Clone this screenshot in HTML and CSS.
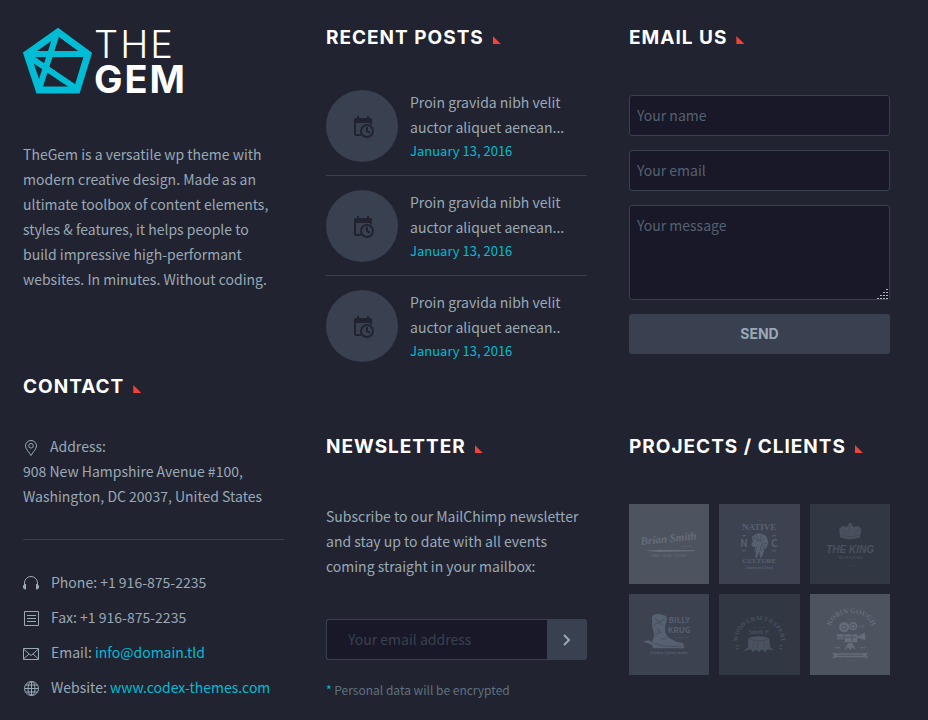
FILE: index.html
```html
<!DOCTYPE html>
<html lang="en">
<head>
<meta charset="utf-8">
<meta name="viewport" content="width=device-width, initial-scale=1">
<title>TheGem</title>
<link rel="stylesheet" href="styles.css">
</head>
<body>
<svg class="sprite" aria-hidden="true">
  <symbol id="calendar" viewBox="0 0 22 24">
    <path fill="currentColor" fill-rule="evenodd" d="M2 3h2V1h2v2h8V1h2v2h1a2 2 0 0 1 2 2v4.500h-2V8H3v11h5v2H3a2 2 0 0 1-2-2V5a2 2 0 0 1 1-2z"/>
    <circle cx="14" cy="16" r="6" fill="none" stroke="currentColor" stroke-width="2"/>
    <path d="M14 12v4l3 2" fill="none" stroke="currentColor" stroke-width="2"/>
  </symbol>
</svg>
<footer class="footer">
  <div class="column">
    <a class="logo" href="#" aria-label="The Gem">
      <svg class="logo-mark" viewBox="0 0 70 68" aria-hidden="true">
        <path fill="none" stroke="#00bcd4" stroke-width="7" d="M35 5 65 27 54 63H16L4 27Z"/>
        <path fill="none" stroke="#00bcd4" stroke-width="6" d="M4 27H65M34 6 16 62M8 31 54 62"/>
      </svg>
      <span class="logo-text"><span class="logo-the">THE</span><span class="logo-gem">GEM</span></span>
    </a>
    <p class="about">TheGem is a versatile wp theme with modern creative design. Made as an ultimate toolbox of content elements, styles &amp; features, it helps people to build impressive high-performant websites. In minutes. Without coding.</p>
    <section class="contact">
      <h2 class="title">CONTACT</h2>
      <address class="address">
        <svg class="icon pin" viewBox="0 0 16 16" aria-hidden="true"><path d="M8 15.500C6 12 2.500 9 2.500 5.800a5.500 5.300 0 0 1 11 0C13.500 9 10 12 8 15.500Z"/><circle cx="8" cy="5.800" r="2.300"/></svg>Address:<br>908 New Hampshire Avenue #100,<br>Washington, DC 20037, United States
      </address>
      <ul class="contact-list">
        <li><svg class="icon" viewBox="0 0 16 16" aria-hidden="true"><path d="M1.500 11V8a6.500 6.500 0 0 1 13 0v3"/><path class="solid" d="M0 10.500 2 9h1v5.500H2L0 13ZM16 10.500 14 9h-1v5.500h1L16 13Z"/></svg>Phone: +1 916-875-2235</li>
        <li><svg class="icon" viewBox="0 0 16 16" aria-hidden="true"><path d="M1.500 1.500h14v14h-14zM4 5.500h9M4 8.500h9M4 11.500h9"/></svg>Fax: +1 916-875-2235</li>
        <li><svg class="icon" viewBox="0 0 16 16" aria-hidden="true"><path d="M.5 3.500h15v11H.5zM.5 4 8 10.500 15.500 4M.5 14l5.500-5M15.500 14 10 9"/></svg><span>Email: <a href="mailto:info@domain.tld">info@domain.tld</a></span></li>
        <li><svg class="icon" viewBox="0 0 16 16" aria-hidden="true"><circle cx="8.500" cy="8.500" r="7"/><ellipse cx="8.500" cy="8.500" rx="3.500" ry="7"/><path d="M8.500 1.500v14M1.500 8.500h14M2.500 5h12M2.500 12h12"/></svg><span>Website: <a href="#">www.codex-themes.com</a></span></li>
      </ul>
    </section>
  </div>

  <div class="column">
    <section>
      <h2 class="title">RECENT POSTS</h2>
      <ul class="posts">
        <li class="post"><span class="thumb"><svg aria-hidden="true"><use href="#calendar"/></svg></span><div><a class="post-title" href="#">Proin gravida nibh velit auctor aliquet aenean...</a><time datetime="2016-01-13">January 13, 2016</time></div></li>
        <li class="post"><span class="thumb"><svg aria-hidden="true"><use href="#calendar"/></svg></span><div><a class="post-title" href="#">Proin gravida nibh velit auctor aliquet aenean...</a><time datetime="2016-01-13">January 13, 2016</time></div></li>
        <li class="post"><span class="thumb"><svg aria-hidden="true"><use href="#calendar"/></svg></span><div><a class="post-title" href="#">Proin gravida nibh velit auctor aliquet aenean..</a><time datetime="2016-01-13">January 13, 2016</time></div></li>
      </ul>
    </section>
    <section class="newsletter">
      <h2 class="title">NEWSLETTER</h2>
      <p>Subscribe to our MailChimp newsletter and stay up to date with all events coming straight in your mailbox:</p>
      <form class="subscribe">
        <input type="email" placeholder="Your email address" aria-label="Your email address">
        <button type="button" aria-label="Subscribe"><svg viewBox="0 0 10 12" aria-hidden="true"><path d="M2 1l5 5-5 5"/></svg></button>
      </form>
      <p class="note"><span>*</span> Personal data will be encrypted</p>
    </section>
  </div>

  <div class="column">
    <section>
      <h2 class="title">EMAIL US</h2>
      <form class="email-form">
        <input type="text" placeholder="Your name" aria-label="Your name">
        <input type="email" placeholder="Your email" aria-label="Your email">
        <textarea placeholder="Your message" aria-label="Your message"></textarea>
        <button type="button">SEND</button>
      </form>
    </section>
    <section class="projects">
      <h2 class="title">PROJECTS / CLIENTS</h2>
      <div class="clients">
        <a class="client light" href="#"><svg viewBox="0 0 80 80">
          <g transform="rotate(-6 40 40)"><text class="script" x="40" y="38" font-size="11">Brian Smith</text></g>
          <path d="M15 46.500 30 45.500 65 46v1l-35 .8Z"/><text x="57" y="43" font-size="2">SINCE 1987</text>
          <text x="40" y="53" font-size="3">PARIS · MILAN · SYDNEY</text></svg></a>
        <a class="client mid" href="#"><svg viewBox="0 0 80 80">
          <text x="40" y="17" font-size="2">THE</text><text class="serif" x="40" y="26" font-size="9">NATIVE</text>
          <text class="condensed" x="25" y="43" font-size="10">N</text><text class="condensed" x="55" y="43" font-size="10">C</text>
          <path d="M23 31h4v1h-4zM53 31h4v1h-4zM23 46h4v1h-4zM53 46h4v1h-4z"/>
          <path d="M33 32l2-1 2-1 3-1 3 1 3 1 2 3 1 4-1 4-2 3-2-1 1 3-2 5-2 2-1-7-2 6-2 1 1-7-2 1 1-5-3-1-1-2 2-3-1-2Z"/><path class="cut" d="M34 33l5 4M37 31l3 6M42 31l-1 6M46 34l-5 4M48 39l-6 1M46 43l-4-2M38 42l-2 5M41 42l1 5"/>
          <text class="serif" x="40" y="59" font-size="7">CULTURE</text><text class="script" x="40" y="65" font-size="4">American Chiefs</text></svg></a>
        <a class="client dark" href="#"><svg viewBox="0 0 80 80">
          <path d="M30 33l-1-8 3-3 5 1 2-4h2l2 4 5-1 3 3-1 8q-10 4-20 0Z"/><path class="cut" d="M31 25q4 2 6 6M39 21v9M49 25q-4 2-6 6M31 31q9 3 18 0"/>
          <text class="brush" x="40" y="49" font-size="10">THE KING</text><text x="40" y="55" font-size="3">TAILOR FOR MEN</text><text x="40" y="62" font-size="2">SYDNEY</text></svg></a>
        <a class="client mid" href="#"><svg viewBox="0 0 80 80">
          <path d="M23 23q2-4 7-3l7 2 1 4-2 5v7l3 5 7 4 8 2 1 5H24l-1-3-4-2-4-1v-1l5-1 3 2 2-7-2-10Z"/><path class="cut" d="M26 24l4 4 5-3M25 31l4-3 5 3M28 34l3 4M26 40l6-2M32 45l5-1M26 49l8 3 18 0"/>
          <text class="condensed" x="50" y="29" font-size="8">BILLY</text><text class="condensed" x="50" y="39" font-size="8">KRUG</text><text x="52" y="44" font-size="2">CUSTOM MADE</text><text class="script" x="40" y="60" font-size="4">Cowboy's jersey maker</text></svg></a>
        <a class="client dark" href="#"><svg viewBox="0 0 80 80">
          <path id="wood-arc" class="guide" d="M18 48a22 22 0 0 1 44 0"/><text class="serif" font-size="6"><textPath href="#wood-arc" startOffset="50%">WOOD CRAFT EXPERT</textPath></text>
          <text x="40" y="34" font-size="2">EST. IN 1979</text><text class="script" x="40" y="40" font-size="6">Smith F.</text>
          <path d="M29 44q11-4 21 0l1 9 4 3-7-1-2 3-3-3-4 3-1-3-5 3-1-3-8 2 5-4Z"/><path class="cut" d="M30 45q10 3 19 0M34 48v6M39 48l-1 5M45 48v5"/>
          <path d="M17 51h3v1h-3zM17 54h3v1h-3zM60 51h3v1h-3zM60 54h3v1h-3z"/></svg></a>
        <a class="client light" href="#"><svg viewBox="0 0 80 80">
          <path id="robin-arc" class="guide" d="M20 36a21 17 0 0 1 42 0"/><text class="serif" font-size="7"><textPath href="#robin-arc" startOffset="50%">ROBIN GOUGH</textPath></text>
          <text x="41" y="26" font-size="2">FILM ART</text><circle cx="34" cy="33" r="5"/><circle cx="43" cy="32" r="4"/><circle class="cut" cx="34" cy="33" r="2"/><circle class="cut" cx="43" cy="32" r="2"/><path d="M27 40h20v2l3-1 5-3v8l-5-2-3 0v4H34v-3h-7ZM38 49h4l4 7-4-3-2 3-2-3-4 3Z"/><path class="cut" d="M28 43h18M34 40v7M42 40v7"/>
          <text x="51" y="34" font-size="4">CR</text><path d="M22 58l4 1h28l4-1-2 3 2 3-4-1H26l-4 1 2-3ZM25 53h5v1h-5zM50 53h5v1h-5z"/><path class="cut" d="M27 61h26"/><text x="40" y="67" font-size="2">FILMS</text></svg></a>
      </div>
    </section>
  </div>
</footer>
</body>
</html>
```
FILE: styles.css
```css
* { box-sizing: border-box; }

body {
  margin: 0;
  background: #212330;
  color: #99a9b5;
  font: 14px/25px "Noto Sans CJK SC", "Noto Sans", sans-serif;
}

a { color: #00bcd4; text-decoration: none; }
p, ul { margin: 0; padding: 0; list-style: none; }
.sprite { position: absolute; width: 0; height: 0; }

.footer {
  display: grid;
  grid-template-columns: repeat(3, minmax(0, 1fr));
  gap: 42px;
  padding: 23px 38px 18px 23px;
}

.title {
  display: flex;
  align-items: baseline;
  gap: 9px;
  margin: 0 0 42px;
  color: #fff;
  font: 700 19px/30px Inter, sans-serif;
  letter-spacing: 1px;
  white-space: nowrap;
}
.title::after {
  content: "";
  width: 8px;
  height: 8px;
  background: #f44336;
  clip-path: polygon(0 0, 100% 100%, 0 100%);
}

.logo { display: flex; align-items: center; gap: 1px; margin-top: 2px; }
.logo-mark { width: 70px; height: 68px; }
.logo-text { display: flex; flex-direction: column; margin-top: 2px; color: #fff; font: 38px/35px Inter, sans-serif; letter-spacing: 2px; }
.logo-the { font-weight: 300; }
.logo-gem { font-weight: 700; }
.about { margin-top: 45px; }

.contact { margin-top: 80px; }
.contact .title { margin-bottom: 32px; }
.address { padding-bottom: 30px; border-bottom: 1px solid #394050; font-style: normal; }
.icon { flex: none; width: 16px; height: 16px; fill: none; stroke: currentColor; }
.icon .solid { fill: currentColor; stroke: none; }
.pin { margin-right: 11px; vertical-align: middle; }
.contact-list { display: grid; gap: 10px; margin-top: 30px; }
.contact-list li { display: flex; align-items: center; gap: 12px; }

.posts { margin-top: -19px; }
.post { display: flex; gap: 12px; padding: 14px 0 13px; border-bottom: 1px solid #394050; }
.post:last-child { border-color: transparent; }
.thumb {
  display: grid;
  flex: none;
  place-items: center;
  width: 72px;
  height: 72px;
  border-radius: 50%;
  background: #394050;
  color: #212330;
}
.thumb svg { width: 22px; height: 24px; margin: 2px 0 0 4px; }
.post-title { display: block; color: inherit; }
.post time { display: block; color: #00bcd4; font-size: 13px; line-height: 22px; }

.newsletter { margin-top: 56px; }
.subscribe { display: flex; margin-top: 40px; }
.subscribe button {
  display: grid;
  flex: none;
  place-items: center;
  width: 40px;
  padding: 0;
  border: 0;
  border-radius: 0 3px 3px 0;
  background: #394050;
}
.subscribe svg { width: 10px; height: 12px; fill: none; stroke: #99a9b5; stroke-width: 2; }
.subscribe input { border-right: 0; border-radius: 3px 0 0 3px; padding: 0 21px 2px; }
.subscribe input::placeholder { color: #394050; }
.note { margin-top: 19px; color: #5f727f; font-size: 12px; line-height: 22px; }
.note span { color: #00bcd4; }

input, textarea {
  display: block;
  width: 100%;
  min-width: 0;
  height: 41px;
  margin: 0;
  padding: 0 7px 2px;
  border: 1px solid #394050;
  border-radius: 3px;
  background: #181828;
  color: #99a9b5;
  font: inherit;
}
textarea { height: 95px; padding: 7px; }
textarea::-webkit-resizer {
  background:
    linear-gradient(135deg, #181828 55%, transparent 55%),
    repeating-linear-gradient(0deg, transparent 0 1px, #181828 1px 3px),
    repeating-linear-gradient(90deg, #b4b6be 0 2px, #181828 2px 3px);
}
::placeholder { color: #556270; opacity: 1; }
.email-form { display: grid; gap: 14px; }
.email-form button {
  height: 40px;
  border: 0;
  border-radius: 3px;
  background: #394050;
  color: #99a9b5;
  font: 700 14px/20px Inter, sans-serif;
}

.projects { margin-top: 78px; }
.clients { display: grid; grid-template-columns: repeat(3, 1fr); gap: 10px; }
.client { aspect-ratio: 1; }
.client svg { display: block; width: 100%; height: 100%; fill: currentColor; }
.client text { font-family: "Liberation Sans", sans-serif; text-anchor: middle; }
.client .script { font-family: "Liberation Serif", serif; font-style: italic; font-weight: 700; }
.client .serif { font-family: "Liberation Serif", serif; font-weight: 700; }
.client .condensed { font-family: "Liberation Sans Narrow", "Noto Sans CJK SC", sans-serif; font-weight: 700; }
.client .brush { font-family: "Liberation Sans", sans-serif; font-style: italic; font-weight: 700; }
.client .guide { fill: none; }
.client .cut { fill: none; stroke: #3c414f; stroke-opacity: 0.5; }
.light { background: #4e545f; color: #666c79; }
.mid { background: #3c4250; color: #576070; }
.dark { background: #323843; color: #4a515f; }
```
